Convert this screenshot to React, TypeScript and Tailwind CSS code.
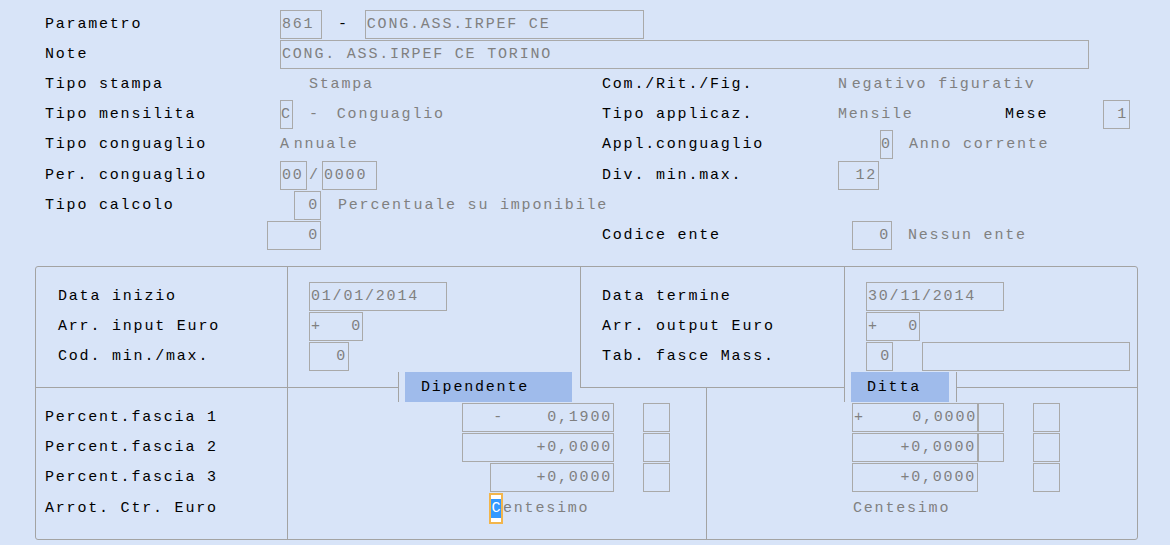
import type { ReactNode } from "react";

const Field = ({
  className = "",
  right = false,
  children,
}: {
  className?: string;
  right?: boolean;
  children?: ReactNode;
}) => (
  <div
    className={`flex h-[29px] shrink-0 items-center whitespace-pre border border-[#a9a9a9] text-[#808080] ${
      right ? "justify-end pr-px" : "pl-px"
    } ${className}`}
  >
    {children}
  </div>
);

const Row = ({ children, className = "" }: { children?: ReactNode; className?: string }) => (
  <div className={`flex h-[30.2px] items-center ${className}`}>{children}</div>
);

const SubRow = ({ children, className = "" }: { children?: ReactNode; className?: string }) => (
  <div className={`flex h-[30.3px] items-center ${className}`}>{children}</div>
);

export default function App() {
  return (
    <div className="relative h-[545px] w-[1170px] overflow-hidden bg-[#d8e4f8] font-['Liberation_Mono',monospace] text-[15px] leading-none tracking-[1.8px] text-black">
      {/* Upper form */}
      <div className="h-[266px] pl-[45px] pt-[9px]">
        <Row>
          <span className="w-[235px] shrink-0">Parametro</span>
          <Field className="w-[42px]">861</Field>
          <span className="ml-[16px]">-</span>
          <Field className="ml-[16px] w-[279px]">CONG.ASS.IRPEF CE</Field>
        </Row>
        <Row>
          <span className="w-[235px] shrink-0">Note</span>
          <Field className="w-[809px]">CONG. ASS.IRPEF CE TORINO</Field>
        </Row>
        <Row>
          <span className="w-[235px] shrink-0">Tipo stampa</span>
          <span className="w-[322px] shrink-0 pl-[29px] text-[#808080]">Stampa</span>
          <span className="w-[236px] shrink-0">Com./Rit./Fig.</span>
          <span className="text-[#808080]">
            N<span className="ml-[3px]">egativo figurativ</span>
          </span>
        </Row>
        <Row>
          <span className="w-[235px] shrink-0">Tipo mensilita</span>
          <div className="flex w-[322px] shrink-0 items-center text-[#808080]">
            <Field className="w-[13px] !pl-0">C</Field>
            <span className="ml-[16px]">-</span>
            <span className="ml-[17px]">Conguaglio</span>
          </div>
          <span className="w-[236px] shrink-0">Tipo applicaz.</span>
          <span className="w-[167px] shrink-0 text-[#808080]">Mensile</span>
          <span className="w-[98px] shrink-0">Mese</span>
          <Field right className="w-[27px]">1</Field>
        </Row>
        <Row>
          <span className="w-[235px] shrink-0">Tipo conguaglio</span>
          <span className="w-[322px] shrink-0 text-[#808080]">
            A<span className="ml-[3px]">nnuale</span>
          </span>
          <span className="w-[236px] shrink-0">Appl.conguaglio</span>
          <Field className="ml-[42px] w-[13px] !pl-0">0</Field>
          <span className="ml-[16px] text-[#808080]">Anno corrente</span>
        </Row>
        <Row>
          <span className="w-[235px] shrink-0">Per. conguaglio</span>
          <div className="flex w-[322px] shrink-0 items-center">
            <Field className="w-[27px]">00</Field>
            <span className="w-[15px] pl-[2px] text-[#808080]">/</span>
            <Field className="w-[55px]">0000</Field>
          </div>
          <span className="w-[236px] shrink-0">Div. min.max.</span>
          <Field right className="w-[41px]">12</Field>
        </Row>
        <Row>
          <span className="w-[235px] shrink-0">Tipo calcolo</span>
          <Field right className="ml-[14px] w-[27px]">0</Field>
          <span className="ml-[17px] text-[#808080]">Percentuale su imponibile</span>
        </Row>
        <Row>
          <span className="w-[222px] shrink-0" />
          <Field right className="w-[54px]">0</Field>
          <span className="w-[281px] shrink-0" />
          <span className="w-[250px] shrink-0">Codice ente</span>
          <Field right className="w-[40px]">0</Field>
          <span className="ml-[16px] text-[#808080]">Nessun ente</span>
        </Row>
      </div>

      {/* Lower panel */}
      <div className="relative ml-[35px] h-[274px] w-[1103px] rounded-[3px] border border-[#a3a3a3]">
        <div className="flex h-[121px] border-b border-[#a3a3a3]">
          <div className="w-[252px] shrink-0 border-r border-[#a3a3a3] pl-[22px] pt-[14px]">
            <SubRow>Data inizio</SubRow>
            <SubRow>Arr. input Euro</SubRow>
            <SubRow>Cod. min./max.</SubRow>
          </div>
          <div className="w-[293px] shrink-0 border-r border-[#a3a3a3] pl-[21px] pt-[14px]">
            <SubRow>
              <Field className="w-[138px]">01/01/2014</Field>
            </SubRow>
            <SubRow>
              <Field className="w-[54px] justify-between">
                <span>+</span>
                <span>0</span>
              </Field>
            </SubRow>
            <SubRow>
              <Field right className="w-[40px]">0</Field>
            </SubRow>
          </div>
          <div className="w-[264px] shrink-0 border-r border-[#a3a3a3] pl-[21px] pt-[14px]">
            <SubRow>Data termine</SubRow>
            <SubRow>Arr. output Euro</SubRow>
            <SubRow>Tab. fasce Mass.</SubRow>
          </div>
          <div className="flex-1 pl-[21px] pt-[14px]">
            <SubRow>
              <Field className="w-[138px]">30/11/2014</Field>
            </SubRow>
            <SubRow>
              <Field className="w-[54px] justify-between">
                <span>+</span>
                <span>0</span>
              </Field>
            </SubRow>
            <SubRow>
              <Field right className="w-[27px]">0</Field>
              <Field className="ml-[29px] w-[208px]" />
            </SubRow>
          </div>
        </div>

        <div className="flex h-[151px]">
          <div className="w-[252px] shrink-0 border-r border-[#a3a3a3] pl-[9px] pt-[14px]">
            <SubRow>Percent.fascia 1</SubRow>
            <SubRow>Percent.fascia 2</SubRow>
            <SubRow>Percent.fascia 3</SubRow>
            <SubRow>Arrot. Ctr. Euro</SubRow>
          </div>
          <div className="w-[419px] shrink-0 border-r border-[#a3a3a3] pt-[14px]">
            <SubRow>
              <Field right className="ml-[174px] w-[152px]">-    0,1900</Field>
              <Field className="ml-[29px] w-[27px]" />
            </SubRow>
            <SubRow>
              <Field right className="ml-[174px] w-[152px]">+0,0000</Field>
              <Field className="ml-[29px] w-[27px]" />
            </SubRow>
            <SubRow>
              <Field right className="ml-[202px] w-[124px]">+0,0000</Field>
              <Field className="ml-[29px] w-[27px]" />
            </SubRow>
            <SubRow>
              <div className="ml-[201px] flex h-[31px] w-[14px] shrink-0 flex-col border-2 border-[#f2b54c] bg-white py-[4px]">
                <div className="flex flex-1 items-center justify-center bg-[#3399ff] tracking-normal text-white">
                  C
                </div>
              </div>
              <span className="text-[#808080]">entesimo</span>
            </SubRow>
          </div>
          <div className="flex-1 pt-[14px]">
            <SubRow>
              <Field className="ml-[145px] w-[126px] justify-between">
                <span>+</span>
                <span>0,0000</span>
              </Field>
              <Field className="w-[26px]" />
              <Field className="ml-[29px] w-[27px]" />
            </SubRow>
            <SubRow>
              <Field right className="ml-[145px] w-[126px]">+0,0000</Field>
              <Field className="w-[26px]" />
              <Field className="ml-[29px] w-[27px]" />
            </SubRow>
            <SubRow>
              <Field right className="ml-[145px] w-[126px]">+0,0000</Field>
              <Field className="ml-[55px] w-[27px]" />
            </SubRow>
            <SubRow>
              <span className="ml-[146px] text-[#808080]">Centesimo</span>
            </SubRow>
          </div>
        </div>

        {/* Group tabs over the divider line */}
        <div className="absolute left-[362px] top-[105px] flex h-[30px] w-[182px] border-l border-[#a3a3a3] bg-[#d8e4f8] pl-[6px]">
          <div className="flex w-[167px] items-center bg-[#9fbbeb] pl-[16px]">Dipendente</div>
        </div>
        <div className="absolute left-[808px] top-[105px] flex h-[30px] w-[113px] border-x border-[#a3a3a3] bg-[#d8e4f8] pl-[6px]">
          <div className="flex w-[98px] items-center bg-[#9fbbeb] pl-[16px]">Ditta</div>
        </div>
      </div>
    </div>
  );
}
